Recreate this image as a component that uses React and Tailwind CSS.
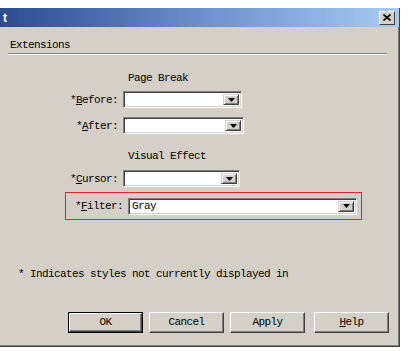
import React from 'react';

const mono = { fontFamily: '"Liberation Mono", "DejaVu Sans Mono", monospace' };

function Arrow() {
  return (
    <div className="h-full w-[16px] bg-[#d4d0c8] border-t border-l border-t-[#d4d0c8] border-l-[#d4d0c8] border-r border-b border-r-[#404040] border-b-[#404040] shadow-[inset_1px_1px_0_#ffffff,inset_-1px_-1px_0_#808080] flex items-center justify-center">
      <svg width="7" height="4" viewBox="0 0 7 4">
        <path d="M0 0h7L3.5 4z" fill="#000" />
      </svg>
    </div>
  );
}

function Select({ width, value }) {
  return (
    <div
      className="h-[17px] bg-white border border-t-[#808080] border-l-[#808080] border-r-white border-b-white shadow-[inset_1px_1px_0_#404040,inset_-1px_-1px_0_#d4d0c8] flex items-stretch p-[2px] pr-[2px]"
      style={{ width }}
    >
      <div className="flex-1 flex items-center pl-[1px] text-[11px] tracking-[-0.6px] leading-none text-black">{value}</div>
      <Arrow />
    </div>
  );
}

function Label({ children, w = 'w-[123px]' }) {
  return <div className={`${w} text-right pr-[5px] text-[11px] tracking-[-0.6px] leading-[12px] text-black whitespace-nowrap`}>{children}</div>;
}

function Button({ children, primary }) {
  return (
    <div className={`w-[75px] h-[21px] ${primary ? 'border border-black' : ''}`}>
      <div className="w-full h-full bg-[#d4d0c8] border-t border-l border-t-white border-l-white border-r border-b border-r-[#404040] border-b-[#404040] shadow-[inset_-1px_-1px_0_#808080] flex items-center justify-center text-[11px] tracking-[-0.6px] text-black">
        {children}
      </div>
    </div>
  );
}

export default function App() {
  return (
    <div className="w-[409px] h-[351px] bg-white pt-[8px]" style={mono}>
      <div className="w-[400px] h-[339px] bg-[#d4d0c8] border-r border-b border-r-[#404040] border-b-[#404040] shadow-[inset_-1px_-1px_0_#808080] flex flex-col">
        <div className="h-[19px] bg-gradient-to-r from-[#2c4c8e] via-[#6b90cc] to-[#a8cbf2] flex items-center justify-between pl-[3px] pr-[4px]">
          <span className="text-white font-bold text-[12px]" style={{ fontFamily: '"Liberation Sans", Arial, sans-serif' }}>t</span>
          <div className="w-[16px] h-[14px] bg-[#d4d0c8] border-t border-l border-t-white border-l-white border-r border-b border-r-[#404040] border-b-[#404040] flex items-center justify-center">
            <svg width="8" height="7" viewBox="0 0 8 7">
              <path d="M0.5 0.5L7.5 6.5M7.5 0.5L0.5 6.5" stroke="#000" strokeWidth="1.6" />
            </svg>
          </div>
        </div>

        <div className="mt-[12px] pl-[10px] text-[11px] tracking-[-0.6px] leading-[12px] text-black">Extensions</div>
        <div className="mt-[2px] ml-[8px] w-[379px] h-[2px] border-t border-t-[#808080] border-b border-b-white" />

        <div className="mt-[17px] pl-[128px] text-[11px] tracking-[-0.6px] leading-[12px] text-black">Page Break</div>
        <div className="mt-[7px] flex items-center">
          <Label>*<u>B</u>efore:</Label>
          <Select width={119} />
        </div>
        <div className="mt-[9px] flex items-center">
          <Label>*<u>A</u>fter:</Label>
          <Select width={121} />
        </div>

        <div className="mt-[16px] pl-[128px] text-[11px] tracking-[-0.6px] leading-[12px] text-black">Visual Effect</div>
        <div className="mt-[8px] flex items-center">
          <Label>*<u>C</u>ursor:</Label>
          <Select width={117} />
        </div>
        <div className="mt-[5px] ml-[65px] w-[297px] h-[28px] border border-[#e0282c] flex items-center">
          <Label w="w-[62px]">*<u>F</u>ilter:</Label>
          <Select width={229} value="Gray" />
        </div>

        <div className="mt-[48px] pl-[18px] text-[11px] tracking-[-0.6px] leading-[12px] text-black">* Indicates styles not currently displayed in</div>

        <div className="mt-[32px] pl-[68px] flex">
          <Button primary>OK</Button>
          <div className="w-[6px]" />
          <Button>Cancel</Button>
          <div className="w-[6px]" />
          <Button>Apply</Button>
          <div className="w-[9px]" />
          <Button><span><u>H</u>elp</span></Button>
        </div>
      </div>
    </div>
  );
}
